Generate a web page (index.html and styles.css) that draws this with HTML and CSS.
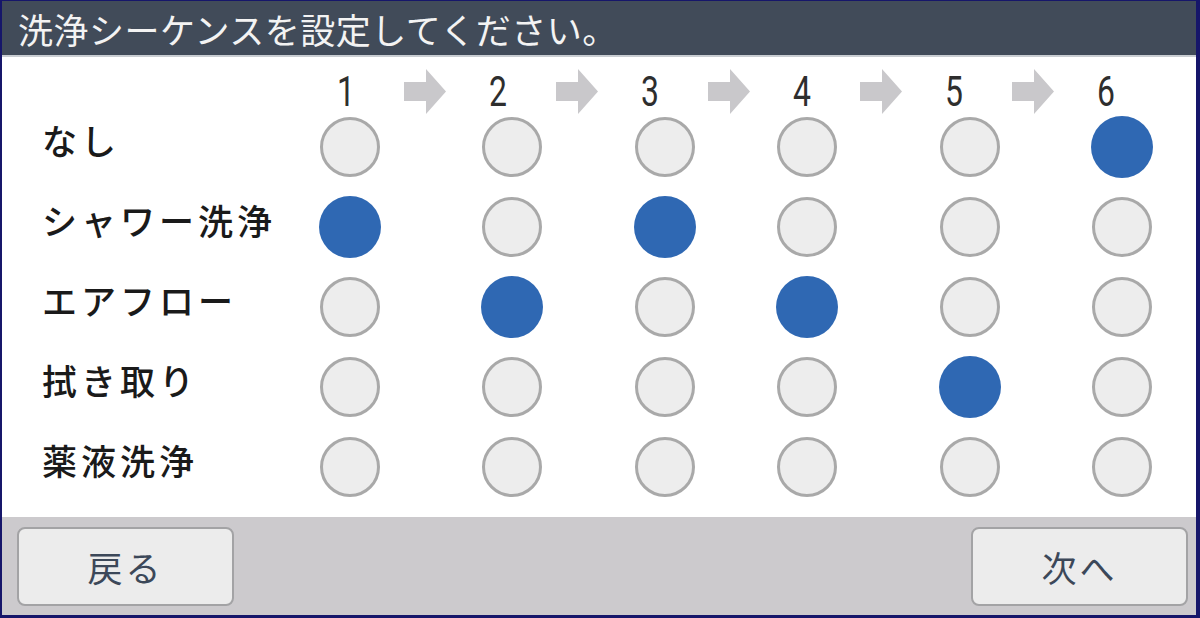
FILE: index.html
```html
<!DOCTYPE html>
<html lang="ja">
<head>
  <meta charset="UTF-8" />
  <title>洗浄シーケンス設定</title>
  <link rel="stylesheet" href="styles.css">
</head>
<body>
  <div class="frame">
    <header class="title">洗浄シーケンスを設定してください。</header>

    <main class="panel">
      <!-- step numbers -->
      <div class="steps">
        <span class="num">1</span>
        <svg class="arrow" viewBox="0 0 42 45"><polygon points="0,13 22,13 22,0 42,22.5 22,45 22,32 0,32" /></svg>
        <span class="num">2</span>
        <svg class="arrow" viewBox="0 0 42 45"><polygon points="0,13 22,13 22,0 42,22.5 22,45 22,32 0,32" /></svg>
        <span class="num">3</span>
        <svg class="arrow" viewBox="0 0 42 45"><polygon points="0,13 22,13 22,0 42,22.5 22,45 22,32 0,32" /></svg>
        <span class="num">4</span>
        <svg class="arrow" viewBox="0 0 42 45"><polygon points="0,13 22,13 22,0 42,22.5 22,45 22,32 0,32" /></svg>
        <span class="num">5</span>
        <svg class="arrow" viewBox="0 0 42 45"><polygon points="0,13 22,13 22,0 42,22.5 22,45 22,32 0,32" /></svg>
        <span class="num">6</span>
      </div>

      <div class="matrix">
        <div class="label">なし</div>
        <span class="dot"></span><span class="dot"></span><span class="dot"></span>
        <span class="dot"></span><span class="dot"></span><span class="dot on"></span>

        <div class="label">シャワー洗浄</div>
        <span class="dot on"></span><span class="dot"></span><span class="dot on"></span>
        <span class="dot"></span><span class="dot"></span><span class="dot"></span>

        <div class="label">エアフロー</div>
        <span class="dot"></span><span class="dot on"></span><span class="dot"></span>
        <span class="dot on"></span><span class="dot"></span><span class="dot"></span>

        <div class="label">拭き取り</div>
        <span class="dot"></span><span class="dot"></span><span class="dot"></span>
        <span class="dot"></span><span class="dot on"></span><span class="dot"></span>

        <div class="label">薬液洗浄</div>
        <span class="dot"></span><span class="dot"></span><span class="dot"></span>
        <span class="dot"></span><span class="dot"></span><span class="dot"></span>
      </div>
    </main>

    <footer class="bar">
      <button class="btn">戻る</button>
      <button class="btn">次へ</button>
    </footer>
  </div>
</body>
</html>
```

FILE: styles.css
```css
body {
  margin: 0;
  font-family: "Noto Sans CJK JP", "Noto Sans", sans-serif;
}
.frame {
  width: 1200px;
  height: 618px;
  box-sizing: border-box;
  border-style: solid;
  border-color: #16166a;
  border-width: 1px 4px 3px 2px;
  display: flex;
  flex-direction: column;
  background: #fff;
}
.title {
  height: 56px;
  flex: none;
  box-sizing: border-box;
  background: #414b59;
  border-bottom: 2px solid #c9cdd2;
  color: #f3f3f3;
  font-size: 35px;
  line-height: 56px;
  letter-spacing: 0.5px;
  padding-left: 16px;
  white-space: nowrap;
}
.panel {
  flex: 1;
}
.steps {
  display: flex;
  align-items: center;
  height: 45px;
  margin-top: 12px;
  padding-left: 324px;
}
.num {
  width: 40px;
  text-align: center;
  font-family: Roboto, "Liberation Sans", sans-serif;
  font-size: 42px;
  line-height: 47px;
  color: #2e2e2e;
  transform: scaleX(0.76);
}
.arrow {
  width: 42px;
  height: 45px;
  margin: 0 32px 0 38px;
  fill: #c9c8cb;
}
.matrix {
  display: grid;
  grid-template-columns: 227px 162px 162px 144px 140px 186px 118px;
  grid-auto-rows: 80px;
  padding-left: 40px;
  align-items: start;
  justify-items: center;
}
.label {
  justify-self: start;
  font-size: 35px;
  line-height: 52px;
  letter-spacing: 4px;
  font-weight: 500;
  color: #1a1a1a;
  white-space: nowrap;
}
.dot {
  width: 60px;
  height: 60px;
  margin-top: 3px;
  box-sizing: border-box;
  border: 3px solid #a9a9a9;
  border-radius: 50%;
  background: #ededed;
}
.dot.on {
  width: 62px;
  height: 62px;
  margin-top: 2px;
  border: none;
  background: #2f68b3;
}
.bar {
  height: 98px;
  flex: none;
  box-sizing: border-box;
  background: #cccacd;
  display: flex;
  justify-content: space-between;
  padding: 10px 8px 8px 15px;
}
.btn {
  width: 217px;
  height: 79px;
  box-sizing: border-box;
  border: 2px solid #a3a3a5;
  border-radius: 8px;
  background: #ececec;
  color: #3c4859;
  font-family: "Noto Sans CJK JP", sans-serif;
  font-size: 35px;
  letter-spacing: 3px;
  padding: 0;
}
```
